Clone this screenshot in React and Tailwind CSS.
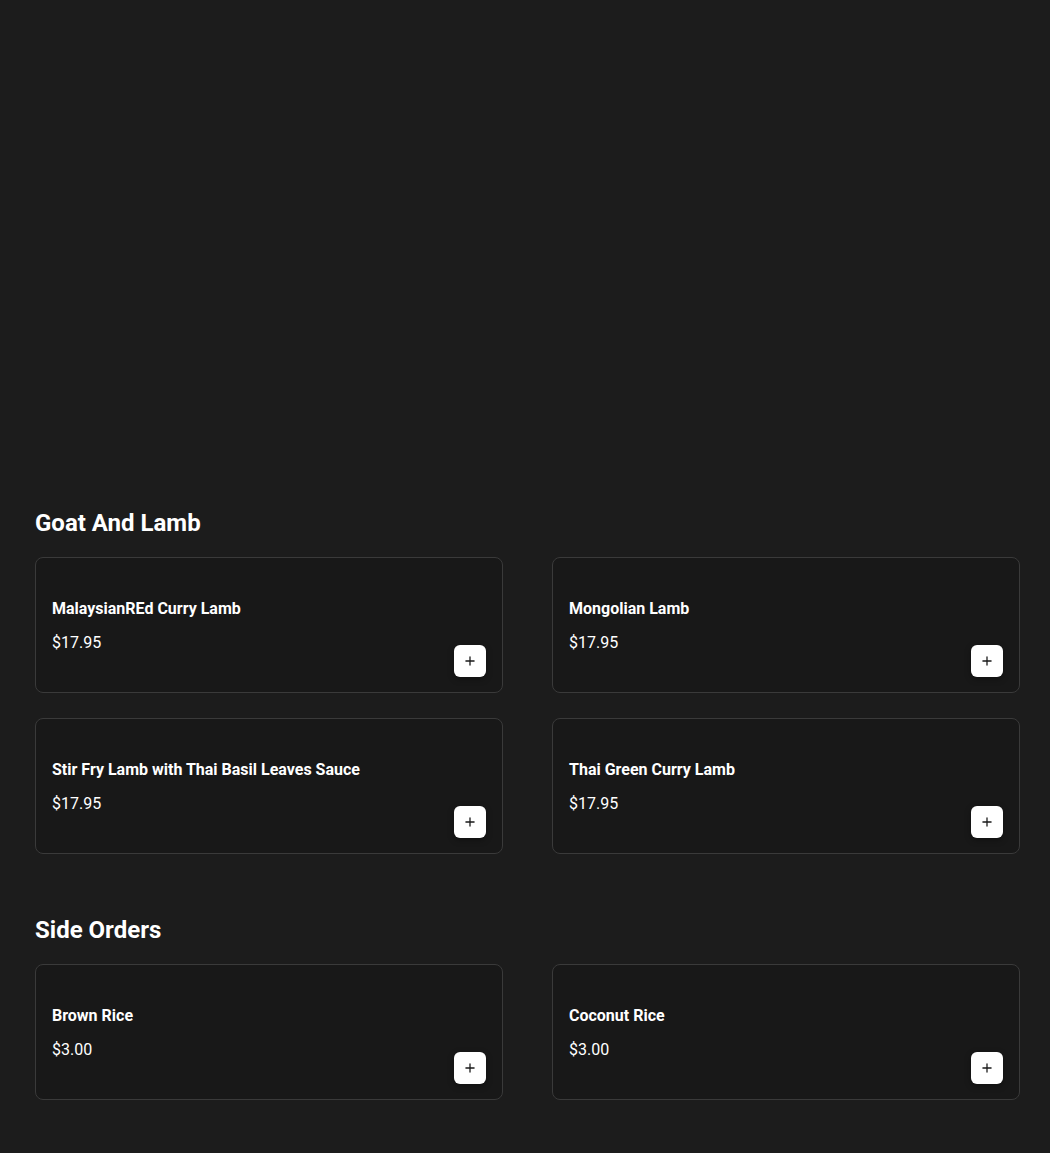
import React from "react";
import { Plus } from "lucide-react";

const sections = [
  {
    title: "Goat And Lamb",
    items: [
      { name: "MalaysianREd Curry Lamb", price: "$17.95" },
      { name: "Mongolian Lamb", price: "$17.95" },
      { name: "Stir Fry Lamb with Thai Basil Leaves Sauce", price: "$17.95" },
      { name: "Thai Green Curry Lamb", price: "$17.95" },
    ],
  },
  {
    title: "Side Orders",
    items: [
      { name: "Brown Rice", price: "$3.00" },
      { name: "Coconut Rice", price: "$3.00" },
    ],
  },
];

function Card({ item }) {
  return (
    <div className="flex justify-between rounded-lg border border-[#3a3a3a] bg-[#181818] pl-4 pr-4">
      <div className="flex flex-col pt-[39px] pb-[37px]">
        <div className="text-base leading-6 font-bold text-white">{item.name}</div>
        <div className="mt-[10px] text-base leading-6 text-white">{item.price}</div>
      </div>
      <div className="flex items-end pb-[15px]">
        <button className="flex h-8 w-8 items-center justify-center rounded-md bg-white text-[#1a1a1a] shadow-[0_2px_6px_rgba(0,0,0,0.35)]">
          <Plus size={14} strokeWidth={2.2} />
        </button>
      </div>
    </div>
  );
}

export default function App() {
  return (
    <div
      className="min-h-[1153px] bg-[#1c1c1c] pl-[35px] pr-[30px] pt-[507px] pb-[53px]"
      style={{ fontFamily: "Roboto, 'Liberation Sans', sans-serif" }}
    >
      {sections.map((s, i) => (
        <section key={s.title} className={i > 0 ? "mt-[60px]" : ""}>
          <h2 className="mb-[18px] text-2xl leading-8 font-bold text-white">{s.title}</h2>
          <div className="grid grid-cols-2 gap-x-[49px] gap-y-[25px]">
            {s.items.map((it) => (
              <Card key={it.name} item={it} />
            ))}
          </div>
        </section>
      ))}
    </div>
  );
}
